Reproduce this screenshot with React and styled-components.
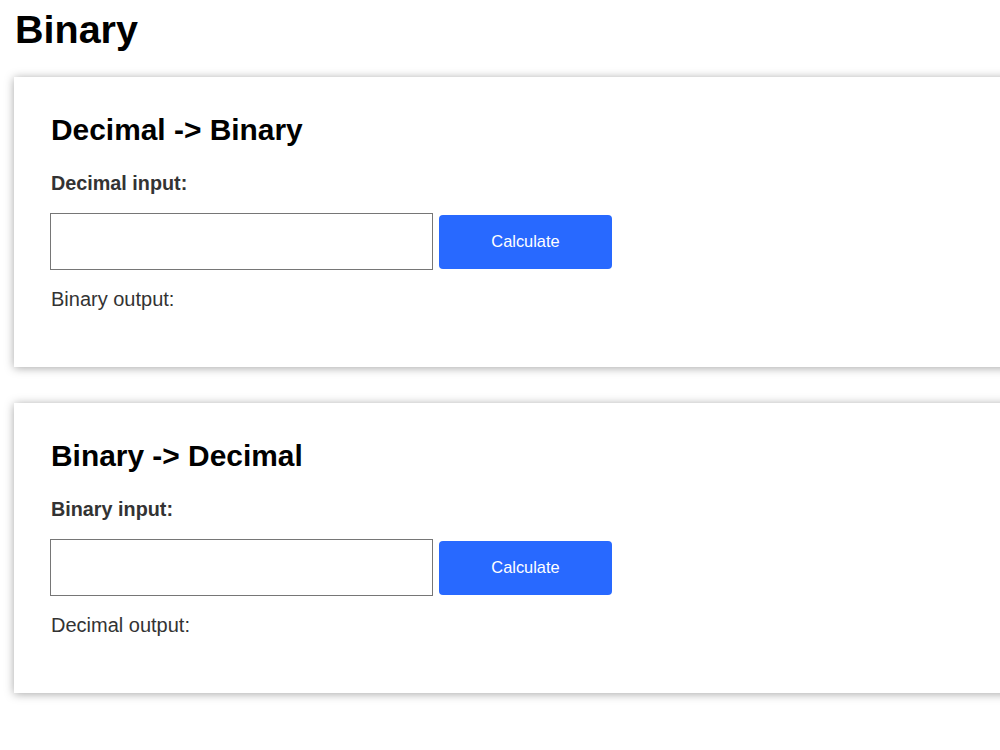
import React, { useState } from "react";
import styled, { createGlobalStyle } from "styled-components";

const GlobalStyle = createGlobalStyle`
  html, body {
    margin: 0;
    padding: 0;
    background: #ffffff;
    overflow: hidden;
  }
  body {
    font-family: "Liberation Sans", Arial, sans-serif;
    color: #000;
  }
`;

const Page = styled.main`
  padding: 7px 0 0 14px;
`;

const Title = styled.h1`
  margin: 0 0 26px 1px;
  font-size: 39.5px;
  line-height: 44px;
  font-weight: 700;
  color: #000;
`;

const Card = styled.section`
  width: 1100px;
  box-sizing: border-box;
  padding: 36px 36px 56px;
  margin-bottom: 36px;
  background: #fff;
  box-shadow: 0 1px 9px rgba(0, 0, 0, 0.35);
`;

const CardTitle = styled.h2`
  margin: 0 0 25px 1px;
  font-size: 29.9px;
  line-height: 34px;
  font-weight: 700;
  color: #000;
`;

const Label = styled.label`
  display: block;
  margin: 0 0 19px 1px;
  font-size: 19.8px;
  line-height: 22px;
  font-weight: 700;
  color: #333;
`;

const Row = styled.div`
  display: flex;
  align-items: center;
  gap: 6px;
`;

const Input = styled.input`
  box-sizing: border-box;
  width: 383px;
  height: 57px;
  margin: 0;
  padding: 0 10px;
  border: 1px solid #767676;
  border-radius: 0;
  font-family: inherit;
  font-size: 20px;
  background: #fff;
  outline: none;
`;

const Button = styled.button`
  box-sizing: border-box;
  width: 173px;
  height: 54px;
  margin: 0;
  border: none;
  border-radius: 4px;
  background: #2869ff;
  color: #fff;
  font-family: "Liberation Sans", Arial, sans-serif;
  font-size: 16.4px;
  cursor: pointer;
`;

const Output = styled.p`
  margin: 18px 0 0 1px;
  font-size: 20px;
  line-height: 23px;
  color: #333;
`;

function toBinary(v) {
  const n = parseInt(v, 10);
  return Number.isNaN(n) ? "" : n.toString(2);
}

function toDecimal(v) {
  if (!/^[01]+$/.test(v.trim())) return "";
  return String(parseInt(v.trim(), 2));
}

function Converter({ title, inputLabel, outputLabel, convert, id }) {
  const [value, setValue] = useState("");
  const [result, setResult] = useState("");
  return (
    <Card>
      <CardTitle>{title}</CardTitle>
      <Label htmlFor={id}>{inputLabel}</Label>
      <Row>
        <Input id={id} value={value} onChange={(e) => setValue(e.target.value)} />
        <Button type="button" onClick={() => setResult(convert(value))}>
          Calculate
        </Button>
      </Row>
      <Output>
        {outputLabel} {result}
      </Output>
    </Card>
  );
}

export default function App() {
  return (
    <>
      <GlobalStyle />
      <Page>
        <Title>Binary</Title>
        <Converter
          id="dec-in"
          title="Decimal -> Binary"
          inputLabel="Decimal input:"
          outputLabel="Binary output:"
          convert={toBinary}
        />
        <Converter
          id="bin-in"
          title="Binary -> Decimal"
          inputLabel="Binary input:"
          outputLabel="Decimal output:"
          convert={toDecimal}
        />
      </Page>
    </>
  );
}
